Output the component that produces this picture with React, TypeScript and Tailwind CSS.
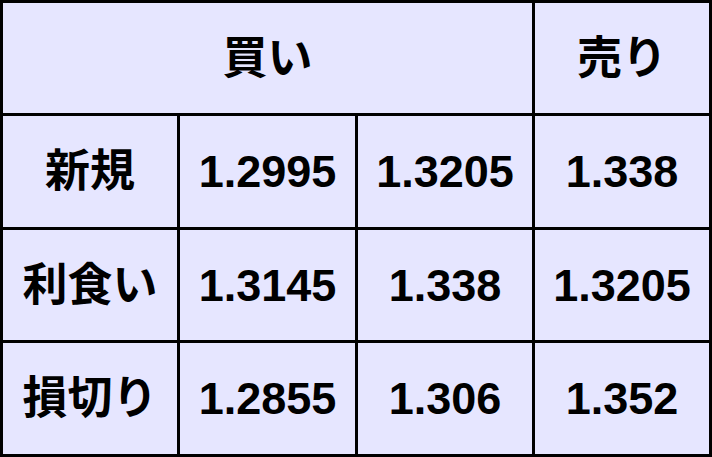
const rows = [
  ["新規", "1.2995", "1.3205", "1.338"],
  ["利食い", "1.3145", "1.338", "1.3205"],
  ["損切り", "1.2855", "1.306", "1.352"],
];

function Cell({ children, className = "" }: { children: React.ReactNode; className?: string }) {
  return (
    <div className={`flex items-center justify-center bg-[#e6e6ff] ${className}`}>
      {children}
    </div>
  );
}

export default function App() {
  return (
    <div
      className="w-[712px] h-[457px] border-[3px] border-black bg-black text-black font-bold text-[45px] leading-none"
      style={{ fontFamily: '"Liberation Sans", "Noto Sans CJK JP", sans-serif' }}
    >
      <div className="grid h-full grid-cols-[174px_175px_174px_174px] grid-rows-[110px_111px_110px_111px] gap-[3px]">
        <Cell className="col-span-3">買い</Cell>
        <Cell>売り</Cell>
        {rows.map((r) =>
          r.map((v, i) => <Cell key={r[0] + i}>{v}</Cell>)
        )}
      </div>
    </div>
  );
}
